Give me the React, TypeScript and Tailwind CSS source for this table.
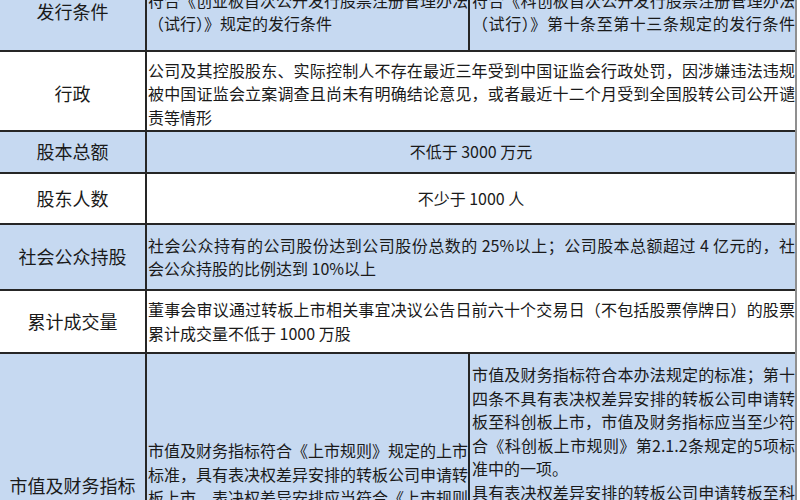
import type { ReactNode } from 'react'

const blue = 'bg-[#c6d9f1]'
const white = 'bg-white'

// one line of a cell; full lines are spread to the cell edge like the Word table
function L({ children, full }: { children: ReactNode; full?: boolean }) {
  return (
    <div className={full ? 'whitespace-nowrap [text-align-last:justify]' : 'whitespace-nowrap'}>
      {children}
    </div>
  )
}

function Label({ children, pt = '' }: { children: ReactNode; pt?: string }) {
  return (
    <div className={`w-[147px] shrink-0 border-r-2 border-[#262626] flex items-center justify-center text-[18px] ${pt}`}>
      {children}
    </div>
  )
}

export default function App() {
  return (
    <div className="w-[800px] h-[500px] overflow-hidden bg-white text-[#1a1a1a] font-['Noto_Sans_CJK_SC','Noto_Sans',sans-serif]">
      <div className="w-[797px] -mt-[26px] border-r-2 border-[#8f8f8f] text-[16px] leading-[23.5px]">
        {/* 发行条件 */}
        <div className={`flex h-[78px] border-b-2 border-[#262626] ${blue}`}>
          <Label>发行条件</Label>
          <div className="w-[323px] shrink-0 border-r-2 border-[#262626] flex flex-col justify-center pl-[1px]">
            <L full>符合《创业板首次公开发行股票注册管理办法</L>
            <L>（试行）》规定的发行条件</L>
          </div>
          <div className="flex-1 flex flex-col justify-center pl-[2px]">
            <L full>符合《科创板首次公开发行股票注册管理办法</L>
            <L full>（试行）》第十条至第十三条规定的发行条件</L>
          </div>
        </div>

        {/* 行政 */}
        <div className={`flex h-[80px] border-b-2 border-[#262626] ${white}`}>
          <Label pt="pt-[6px]">行政</Label>
          <div className="flex-1 flex flex-col justify-center pl-[1px] pt-[6px]">
            <L full>公司及其控股股东、实际控制人不存在最近三年受到中国证监会行政处罚，因涉嫌违法违规</L>
            <L full>被中国证监会立案调查且尚未有明确结论意见，或者最近十二个月受到全国股转公司公开谴</L>
            <L>责等情形</L>
          </div>
        </div>

        {/* 股本总额 */}
        <div className={`flex h-[42px] border-b-2 border-[#262626] ${blue}`}>
          <Label>股本总额</Label>
          <div className="flex-1 flex items-center justify-center">不低于 3000 万元</div>
        </div>

        {/* 股东人数 */}
        <div className={`flex h-[51px] border-b-2 border-[#262626] ${white}`}>
          <Label>股东人数</Label>
          <div className="flex-1 flex items-center justify-center">不少于 1000 人</div>
        </div>

        {/* 社会公众持股 */}
        <div className={`flex h-[66px] border-b-2 border-[#262626] ${blue}`}>
          <Label>社会公众持股</Label>
          <div className="flex-1 flex flex-col justify-center pl-[1px]">
            <L full>社会公众持有的公司股份达到公司股份总数的 25%以上；公司股本总额超过 4 亿元的，社</L>
            <L>会公众持股的比例达到 10%以上</L>
          </div>
        </div>

        {/* 累计成交量 */}
        <div className={`flex h-[63px] border-b-2 border-[#262626] ${white}`}>
          <Label>累计成交量</Label>
          <div className="flex-1 flex flex-col justify-center pl-[1px]">
            <L full>董事会审议通过转板上市相关事宜决议公告日前六十个交易日（不包括股票停牌日）的股票</L>
            <L>累计成交量不低于 1000 万股</L>
          </div>
        </div>

        {/* 市值及财务指标 */}
        <div className={`flex h-[266px] border-b-2 border-[#262626] ${blue}`}>
          <Label>市值及财务指标</Label>
          <div className="w-[323px] shrink-0 border-r-2 border-[#262626] flex flex-col justify-center pl-[1px]">
            <L full>市值及财务指标符合《上市规则》规定的上市</L>
            <L full>标准，具有表决权差异安排的转板公司申请转</L>
            <L full>板上市，表决权差异安排应当符合《上市规则</L>
            <L>》等规定的上市标准</L>
          </div>
          <div className="flex-1 flex flex-col pl-[2px] pt-[9px]">
            <L full>市值及财务指标符合本办法规定的标准；第十</L>
            <L full>四条不具有表决权差异安排的转板公司申请转</L>
            <L full>板至科创板上市，市值及财务指标应当至少符</L>
            <L full>合《科创板上市规则》第2.1.2条规定的5项标</L>
            <L>准中的一项。</L>
            <L full>具有表决权差异安排的转板公司申请转板至科</L>
            <L full>创板上市，市值及财务指标应当至少符合《科</L>
            <L full>创板上市规则》第2.1.4条规定的标准之一。</L>
          </div>
        </div>
      </div>
    </div>
  )
}
